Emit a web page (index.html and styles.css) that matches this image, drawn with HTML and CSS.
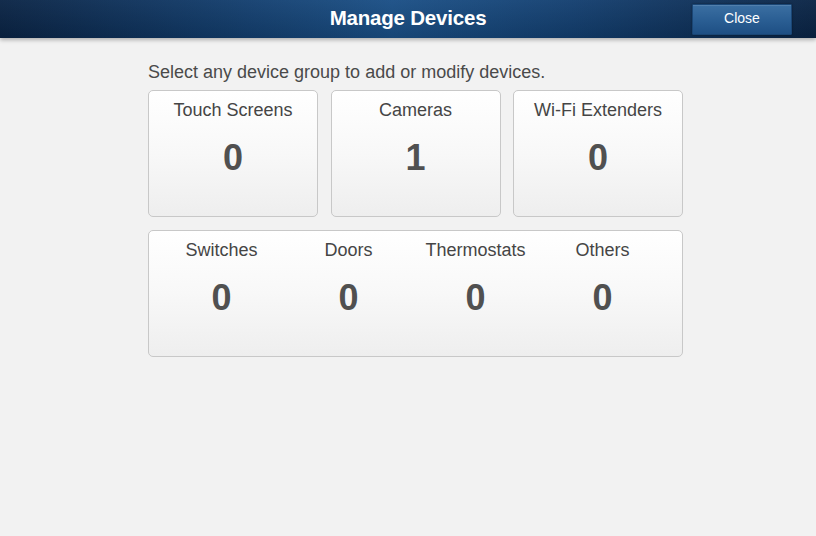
FILE: index.html
```html
<!DOCTYPE html>
<html lang="en">
<head>
<meta charset="utf-8">
<title>Manage Devices</title>
<link rel="stylesheet" href="styles.css">
</head>
<body>
<header class="topbar">
  <div class="topbar-side"></div>
  <h1 class="topbar-title">Manage Devices</h1>
  <div class="topbar-side topbar-right">
    <button class="close-btn" type="button">Close</button>
  </div>
</header>
<main class="content">
  <p class="intro">Select any device group to add or modify devices.</p>
  <div class="card-row">
    <div class="card">
      <div class="card-label">Touch Screens</div>
      <div class="card-count">0</div>
    </div>
    <div class="card">
      <div class="card-label">Cameras</div>
      <div class="card-count">1</div>
    </div>
    <div class="card">
      <div class="card-label">Wi-Fi Extenders</div>
      <div class="card-count">0</div>
    </div>
  </div>
  <div class="card card-wide">
    <div class="group">
      <div class="card-label">Switches</div>
      <div class="card-count">0</div>
    </div>
    <div class="group">
      <div class="card-label">Doors</div>
      <div class="card-count">0</div>
    </div>
    <div class="group">
      <div class="card-label">Thermostats</div>
      <div class="card-count">0</div>
    </div>
    <div class="group">
      <div class="card-label">Others</div>
      <div class="card-count">0</div>
    </div>
  </div>
</main>
</body>
</html>
```

FILE: styles.css
```css
* {
  box-sizing: border-box;
}

html, body {
  margin: 0;
  padding: 0;
}

body {
  background: #f2f2f2;
  font-family: "Liberation Sans", Arial, sans-serif;
  color: #454545;
  width: 816px;
  height: 536px;
  overflow: hidden;
}

.topbar {
  height: 38px;
  display: grid;
  grid-template-columns: 1fr auto 1fr;
  align-items: center;
  background:
    linear-gradient(to bottom, rgba(255,255,255,0.04), rgba(0,0,0,0.12)),
    linear-gradient(to right, #0a2445 0%, #113a68 25%, #1a4f86 48%, #133f70 70%, #0a2445 100%);
  box-shadow: 0 2px 4px rgba(0, 0, 0, 0.28);
  position: relative;
  z-index: 1;
}

.topbar-title {
  margin: 0 0 2px 0;
  color: #ffffff;
  font-size: 20.5px;
  font-weight: bold;
  line-height: 24px;
  letter-spacing: -0.2px;
}

.topbar-right {
  display: flex;
  justify-content: flex-end;
  padding-right: 24px;
}

.close-btn {
  width: 100px;
  height: 31px;
  margin-top: 1px;
  border: 1px solid #1a4675;
  border-radius: 1px;
  background: linear-gradient(to bottom, #3b6fa2 0%, #2b5f94 50%, #1e4f84 100%);
  box-shadow: 0 0 2px rgba(0, 0, 0, 0.45), inset 0 1px 0 rgba(255, 255, 255, 0.12);
  color: #ffffff;
  font-family: "Liberation Sans", Arial, sans-serif;
  font-size: 14px;
  padding: 0 0 3px 0;
  cursor: pointer;
}

.content {
  width: 535px;
  margin-left: 148px;
  padding-top: 23px;
}

.intro {
  margin: 0 0 7px 0;
  font-size: 18px;
  line-height: 22px;
  color: #4a4a4a;
}

.card-row {
  display: grid;
  grid-template-columns: repeat(3, 1fr);
  column-gap: 12.5px;
  margin-bottom: 13px;
}

.card {
  height: 127px;
  border: 1px solid #c8c8c8;
  border-radius: 5px;
  background: linear-gradient(to bottom, #ffffff 0%, #f8f8f8 50%, #eeeeee 100%);
  text-align: center;
  padding-top: 9px;
}

.card-label {
  font-size: 18px;
  line-height: 20px;
  color: #454545;
}

.card-count {
  margin-top: 17.5px;
  font-size: 36px;
  line-height: 40px;
  font-weight: bold;
  color: #505050;
}

.card-wide {
  display: flex;
  padding-left: 9px;
}

.group {
  width: 127px;
}
```
